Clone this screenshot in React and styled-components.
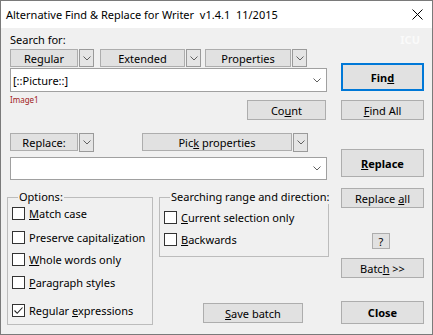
import React from "react";
import styled, { createGlobalStyle } from "styled-components";

const GlobalStyle = createGlobalStyle`
  html, body {
    margin: 0;
    padding: 0;
    background: #fff;
  }
  body {
    font-family: "Noto Sans", "Open Sans", sans-serif;
    font-size: 11px;
    color: #000;
  }
  * {
    box-sizing: border-box;
  }
`;

const Window = styled.div`
  width: 433px;
  height: 335px;
  border: 1px solid #7a7a7a;
  display: flex;
  flex-direction: column;
  overflow: hidden;
`;

const TitleBar = styled.div`
  height: 27px;
  flex-shrink: 0;
  background: #fff;
  display: flex;
  align-items: center;
  justify-content: space-between;
  padding: 0 9px 0 5px;
`;

const Title = styled.span`
  white-space: pre;
  font-size: 11px;
`;

const Body = styled.div`
  flex: 1;
  background: #f0f0f0;
  padding-left: 6px;
  display: flex;
  flex-direction: column;
`;

const Header = styled.div`
  height: 19px;
  padding: 4px 12px 0 3px;
  display: flex;
  justify-content: space-between;
  line-height: 15px;
`;

const Ghost = styled.span`
  color: #fafafa;
  font-weight: bold;
  font-size: 11px;
`;

const Columns = styled.div`
  display: flex;
`;

const LeftCol = styled.div`
  width: 322px;
  display: flex;
  flex-direction: column;
`;

const RightCol = styled.div`
  width: 83px;
  margin-left: 12px;
  display: flex;
  flex-direction: column;
`;

const Row = styled.div`
  display: flex;
  align-items: stretch;
  height: ${(p) => p.$h}px;
  margin: ${(p) => p.$top}px 0 0 3px;
`;

const Button = styled.button`
  font: inherit;
  font-size: 11px;
  color: #000;
  background: #e1e1e1;
  border: ${(p) => (p.$default ? "2px solid #0078d7" : "1px solid #adadad")};
  font-weight: ${(p) => (p.$bold ? "bold" : "normal")};
  padding: 0;
  margin: 0;
  display: flex;
  align-items: center;
  justify-content: center;
  width: ${(p) => (p.$w ? `${p.$w}px` : "auto")};
  height: ${(p) => p.$h}px;
  margin-top: ${(p) => p.$top || 0}px;
  margin-left: ${(p) => p.$left || 0}px;
  margin-right: ${(p) => p.$right || 0}px;
  flex-shrink: 0;
  line-height: 1;
`;

const DropGroup = styled.div`
  display: flex;
  gap: 1px;
  margin-left: ${(p) => p.$left || 0}px;
`;

const ArrowBox = styled.div`
  width: 15px;
  background: #e5e5e5;
  border: 1px solid #9a9a9a;
  display: flex;
  align-items: center;
  justify-content: center;
`;

const Combo = styled.div`
  width: 317px;
  height: ${(p) => p.$h}px;
  margin: ${(p) => p.$top}px 0 0 3px;
  background: #fff;
  border: 1px solid #a0a0a0;
  display: flex;
  align-items: center;
  padding-left: 2px;
`;

const ComboArrow = styled.div`
  margin-left: auto;
  width: 18px;
  height: 100%;
  display: flex;
  align-items: center;
  justify-content: center;
`;

const InfoRow = styled.div`
  display: flex;
  justify-content: space-between;
  align-items: flex-start;
  height: 26px;
  margin: 2px 0 0 3px;
`;

const ErrorText = styled.span`
  font-size: 8px;
  line-height: 10px;
  color: #a02020;
  margin-top: 1px;
`;

const GroupsRow = styled.div`
  display: flex;
  margin-top: 10px;
`;

const Group = styled.fieldset`
  margin: 0;
  padding: 0 4px;
  border: 1px solid #bcbcbc;
  min-width: 0;
  width: ${(p) => p.$w}px;
  height: ${(p) => p.$h}px;
  display: flex;
  flex-direction: column;
`;

const Legend = styled.legend`
  padding: 0 1px;
  margin-left: 6px;
  line-height: 14px;
  font-size: 11px;
  white-space: nowrap;
`;

const SidePart = styled.div`
  width: 170px;
  margin-left: 6px;
  display: flex;
  flex-direction: column;
`;

const Check = styled.label`
  display: flex;
  align-items: center;
  gap: 4px;
  height: 13px;
  line-height: 13px;
  margin-top: ${(p) => p.$top}px;
  white-space: nowrap;
`;

const Box = styled.span`
  width: 13px;
  height: 13px;
  background: #fff;
  border: 1px solid #333;
  display: flex;
  align-items: center;
  justify-content: center;
  flex-shrink: 0;
`;

const Chevron = () => (
  <svg width="8" height="5" viewBox="0 0 8 5">
    <polyline points="0.5,0.5 4,4 7.5,0.5" fill="none" stroke="#606060" strokeWidth="1" />
  </svg>
);

const CloseIcon = () => (
  <svg width="11" height="11" viewBox="0 0 11 11">
    <line x1="0.5" y1="0.5" x2="10.5" y2="10.5" stroke="#000" strokeWidth="1" />
    <line x1="10.5" y1="0.5" x2="0.5" y2="10.5" stroke="#000" strokeWidth="1" />
  </svg>
);

const CheckMark = () => (
  <svg width="11" height="11" viewBox="0 0 11 11">
    <polyline points="1.5,5.5 4.2,8.3 9.5,2.5" fill="none" stroke="#222" strokeWidth="1.1" />
  </svg>
);

function DropButton({ w, left, children }) {
  return (
    <DropGroup $left={left}>
      <Button $w={w} $h={18}>
        {children}
      </Button>
      <ArrowBox>
        <Chevron />
      </ArrowBox>
    </DropGroup>
  );
}

function CheckRow({ top, checked, children }) {
  return (
    <Check $top={top}>
      <Box>{checked ? <CheckMark /> : null}</Box>
      <span>{children}</span>
    </Check>
  );
}

export default function App() {
  return (
    <>
      <GlobalStyle />
      <Window>
        <TitleBar>
          <Title>Alternative Find &amp; Replace for Writer  v1.4.1  11/2015</Title>
          <CloseIcon />
        </TitleBar>
        <Body>
          <Header>
            <span>Search for:</span>
            <Ghost>ICU</Ghost>
          </Header>
          <Columns>
            <LeftCol>
              <Row $h={18} $top={2}>
                <DropButton w={68}>Regular</DropButton>
                <DropButton w={85} left={6}>Extended</DropButton>
                <DropButton w={86} left={4}>Properties</DropButton>
              </Row>
              <Combo $h={24} $top={1}>
                <span>[::Picture::]</span>
                <ComboArrow>
                  <Chevron />
                </ComboArrow>
              </Combo>
              <InfoRow>
                <ErrorText>Image1</ErrorText>
                <Button $w={79} $h={20} $top={6} $right={3}>
                  <span>
                    Co<u>u</u>nt
                  </span>
                </Button>
              </InfoRow>
              <Row $h={19} $top={13}>
                <DropButton w={68}>Replace:</DropButton>
                <DropButton w={150} left={48}>
                  <span>
                    Pic<u>k</u> properties
                  </span>
                </DropButton>
              </Row>
              <Combo $h={23} $top={5}>
                <span></span>
                <ComboArrow>
                  <Chevron />
                </ComboArrow>
              </Combo>
              <GroupsRow>
                <Group $w={146} $h={135}>
                  <Legend>Options:</Legend>
                  <CheckRow top={3}>
                    <u>M</u>atch case
                  </CheckRow>
                  <CheckRow top={11}>
                    Preserve capitali<u>z</u>ation
                  </CheckRow>
                  <CheckRow top={9}>
                    <u>W</u>hole words only
                  </CheckRow>
                  <CheckRow top={10}>
                    <u>P</u>aragraph styles
                  </CheckRow>
                  <CheckRow top={15} checked>
                    Regular <u>e</u>xpressions
                  </CheckRow>
                </Group>
                <SidePart>
                  <Group $w={170} $h={67}>
                    <Legend>Searching range and direction:</Legend>
                    <CheckRow top={7}>
                      <u>C</u>urrent selection only
                    </CheckRow>
                    <CheckRow top={9}>
                      <u>B</u>ackwards
                    </CheckRow>
                  </Group>
                  <Button $w={100} $h={20} $top={46} $left={44}>
                    <span>
                      <u>S</u>ave batch
                    </span>
                  </Button>
                </SidePart>
              </GroupsRow>
            </LeftCol>
            <RightCol>
              <Button $h={28} $top={16} $default $bold>
                <span>
                  Fin<u>d</u>
                </span>
              </Button>
              <Button $h={20} $top={9}>
                <span>
                  <u>F</u>ind All
                </span>
              </Button>
              <Button $h={28} $top={29} $bold>
                <span>
                  <u>R</u>eplace
                </span>
              </Button>
              <Button $h={20} $top={11}>
                <span>
                  Replace <u>a</u>ll
                </span>
              </Button>
              <Button $w={18} $h={16} $top={25} $left={31}>
                ?
              </Button>
              <Button $h={20} $top={9}>
                <span>
                  Batc<u>h</u> &gt;&gt;
                </span>
              </Button>
              <Button $h={23} $top={23} $bold>
                Close
              </Button>
            </RightCol>
          </Columns>
        </Body>
      </Window>
    </>
  );
}
